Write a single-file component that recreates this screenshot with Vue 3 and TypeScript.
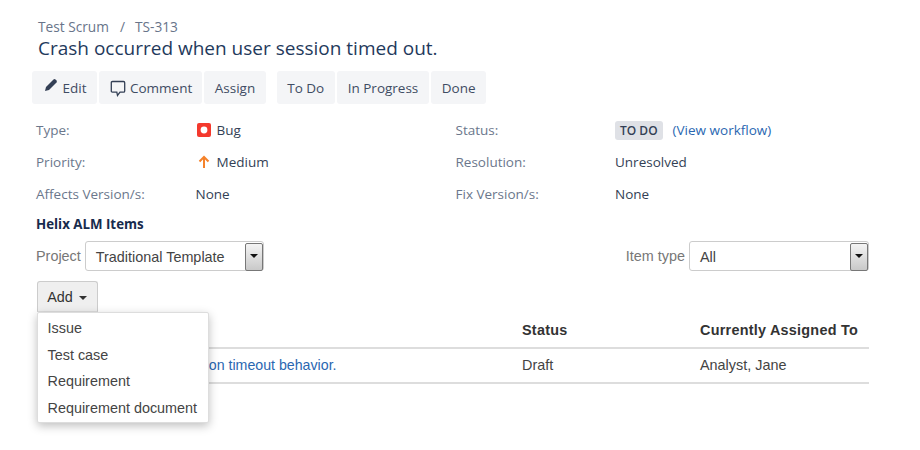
<template>
  <div class="page">
    <div class="crumbs"><a>Test Scrum</a><span class="sep">/</span><a>TS-313</a></div>
    <h1 class="title">Crash occurred when user session timed out.</h1>

    <div class="toolbar">
      <div class="group">
        <button class="tb-btn">
          <svg class="ico-edit" width="14" height="14" viewBox="0 0 14 14">
            <path d="M1 13 L2 9 L9.5 1.5 Q10.5 .7 11.5 1.5 L12.5 2.5 Q13.3 3.5 12.5 4.5 L5 12 Z" fill="#333f55" />
          </svg>
          Edit
        </button>
        <button class="tb-btn tb-comment">
          <svg class="ico-comment" width="16" height="17" viewBox="0 0 16 17">
            <path d="M2.5 1.5 H13.5 Q14.7 1.5 14.7 2.7 V11 Q14.7 12.2 13.5 12.2 H10 L7.5 15.5 L6.8 12.2 H2.5 Q1.3 12.2 1.3 11 V2.7 Q1.3 1.5 2.5 1.5 Z" fill="none" stroke="#333f55" stroke-width="1.3" />
          </svg>
          Comment
        </button>
        <button class="tb-btn">Assign</button>
      </div>
      <div class="group">
        <button v-for="s in transitions" :key="s" class="tb-btn">{{ s }}</button>
      </div>
    </div>

    <div class="fields">
      <div class="field">
        <span class="label">Type:</span>
        <span class="value">
          <svg class="ico" width="16" height="16" viewBox="0 0 16 16">
            <rect x="1" y="1" width="14" height="14" rx="2" fill="#f4392d" />
            <circle cx="8" cy="8" r="3.4" fill="#fff" />
          </svg>
          Bug
        </span>
      </div>
      <div class="field">
        <span class="label">Status:</span>
        <span class="value"><span class="lozenge">TO DO</span><a class="link">(View workflow)</a></span>
      </div>
      <div class="field">
        <span class="label">Priority:</span>
        <span class="value">
          <svg class="ico" width="16" height="16" viewBox="0 0 16 16">
            <path d="M8 14 V3 M3.5 7.5 L8 3 L12.5 7.5" fill="none" stroke="#f5822a" stroke-width="2" />
          </svg>
          Medium
        </span>
      </div>
      <div class="field">
        <span class="label">Resolution:</span>
        <span class="value">Unresolved</span>
      </div>
      <div class="field">
        <span class="label">Affects Version/s:</span>
        <span class="value">None</span>
      </div>
      <div class="field">
        <span class="label">Fix Version/s:</span>
        <span class="value">None</span>
      </div>
    </div>

    <h2 class="section">Helix ALM Items</h2>

    <div class="panel">
      <div class="filters">
        <label class="filter">
          Project
          <span class="select project"><span class="sel-text">Traditional Template</span><i class="sel-arrow"></i></span>
        </label>
        <label class="filter">
          Item type
          <span class="select type"><span class="sel-text">All</span><i class="sel-arrow"></i></span>
        </label>
      </div>

      <div class="add-wrap">
        <button class="add-btn">Add <i class="caret"></i></button>
        <ul class="menu">
          <li v-for="m in menuItems" :key="m">{{ m }}</li>
        </ul>
      </div>

      <table class="items">
        <thead>
          <tr>
            <th class="c-title">Title</th>
            <th class="c-status">Status</th>
            <th class="c-owner">Currently Assigned To</th>
          </tr>
        </thead>
        <tbody>
          <tr>
            <td class="c-title"><a class="link row-link">Verify session timeout behavior.</a></td>
            <td>Draft</td>
            <td>Analyst, Jane</td>
          </tr>
        </tbody>
      </table>
    </div>
  </div>
</template>

<script setup lang="ts">
const transitions: string[] = ['To Do', 'In Progress', 'Done']
const menuItems: string[] = ['Issue', 'Test case', 'Requirement', 'Requirement document']
</script>

<style>
html, body {
  background: #fff;
}
</style>

<style scoped>
.page {
  width: 920px;
  height: 450px;
  box-sizing: border-box;
  padding: 18px 51px 0 32px;
  overflow: hidden;
  font-family: "Open Sans", "Noto Sans", sans-serif;
  font-size: 13.5px;
  color: #333f55;
  background: #fff;
}
.crumbs {
  padding-left: 6px;
  font-size: 13.7px;
  line-height: 17px;
  color: #68748a;
}
.sep {
  margin: 0 10px 0 11px;
}
.title {
  margin: 1px 0 0;
  padding-left: 6px;
  font-size: 19px;
  font-weight: 400;
  line-height: 25px;
  color: #1f3a5c;
}
.toolbar {
  display: flex;
  gap: 11px;
  margin-top: 10px;
}
.group {
  display: flex;
  gap: 2.5px;
}
.tb-btn {
  display: flex;
  align-items: center;
  gap: 5px;
  height: 33px;
  padding: 0 10.5px;
  border: 0;
  border-radius: 3px;
  background: #f4f5f7;
  font: inherit;
  color: #3f4c63;
}
.tb-comment {
  gap: 4px;
  padding-right: 9.5px;
}
.ico-edit {
  margin: -5px 0 0 1px;
}
.ico-comment {
  margin-top: 2px;
}
.fields {
  display: grid;
  grid-template-columns: 419.5px 1fr;
  grid-auto-rows: 32px;
  margin-top: 10px;
  padding-left: 4px;
}
.field {
  display: flex;
  align-items: center;
}
.label {
  width: 159.5px;
  color: #6b778c;
}
.value {
  display: flex;
  align-items: center;
  gap: 5px;
  color: #333f55;
}
.lozenge {
  padding: 1px 5px;
  margin-right: 5px;
  border-radius: 3px;
  background: #dfe1e6;
  font-size: 12px;
  font-weight: 600;
  line-height: 17px;
}
.link {
  color: #2a67b1;
}
.section {
  margin: 6px 0 0;
  padding-left: 4px;
  font-size: 13.3px;
  font-weight: 700;
  line-height: 17px;
  color: #172b4d;
}
.panel {
  margin-top: 8px;
  padding-left: 5px;
  font-family: "Liberation Sans", Arial, sans-serif;
  font-size: 14.4px;
  color: #444;
}
.filters {
  display: flex;
  justify-content: space-between;
  height: 30px;
  margin-left: -1px;
}
.filter {
  display: flex;
  align-items: center;
  gap: 4px;
  color: #777;
}
.select {
  display: flex;
  height: 30px;
  box-sizing: border-box;
  border: 1px solid #ccc;
  border-radius: 3px;
  background: #fff;
  color: #444;
}
.project {
  width: 179px;
}
.type {
  width: 180px;
}
.sel-text {
  flex: 1;
  padding: 7px 0 0 10px;
  line-height: 16px;
}
.sel-arrow {
  position: relative;
  width: 16px;
  margin: 1px 0 0;
  height: 26px;
  border: 1px solid #777;
  border-radius: 2px;
  background: linear-gradient(#f4f4f4, #c9c9c9);
}
.sel-arrow::after {
  content: "";
  position: absolute;
  left: 4px;
  top: 10px;
  border: 4px solid transparent;
  border-top-color: #111;
  border-bottom: 0;
}
.add-wrap {
  position: relative;
  margin-top: 10px;
  height: 31px;
}
.add-btn {
  display: block;
  height: 31px;
  width: 61px;
  padding: 0 1px 0 0;
  border: 1px solid #ccc;
  border-bottom-color: #ddd;
  border-radius: 3px 3px 0 0;
  background: #efefef;
  font: inherit;
  color: #333;
}
.caret {
  display: inline-block;
  margin-left: 2px;
  vertical-align: 2px;
  border: 4px solid transparent;
  border-top-color: #333;
  border-bottom: 0;
}
.menu {
  position: absolute;
  z-index: 2;
  left: 0;
  top: 31px;
  width: 172px;
  height: 111px;
  box-sizing: border-box;
  margin: 0;
  padding: 2px 0 0;
  list-style: none;
  background: #fff;
  border: 1px solid #ddd;
  border-radius: 2px;
  box-shadow: 0 3px 10px rgba(0, 0, 0, .25);
}
.menu li {
  height: 26.6px;
  line-height: 26.6px;
  padding-left: 9.5px;
  color: #444;
  white-space: nowrap;
}
.items {
  width: 832px;
  border-collapse: collapse;
  table-layout: fixed;
}
.items th {
  height: 35px;
  padding: 0;
  text-align: left;
  font-weight: 700;
  letter-spacing: .25px;
  color: #333;
  border-bottom: 2px solid #ddd;
}
.items td {
  height: 35px;
  padding: 0 0 1px;
  box-sizing: border-box;
  border-bottom: 2px solid #ddd;
  color: #444;
}
.row-link {
  font-size: 14.2px;
}
.c-title {
  width: 485px;
  padding-left: 100px !important;
  box-sizing: border-box;
}
.c-status {
  width: 178px;
}
</style>
